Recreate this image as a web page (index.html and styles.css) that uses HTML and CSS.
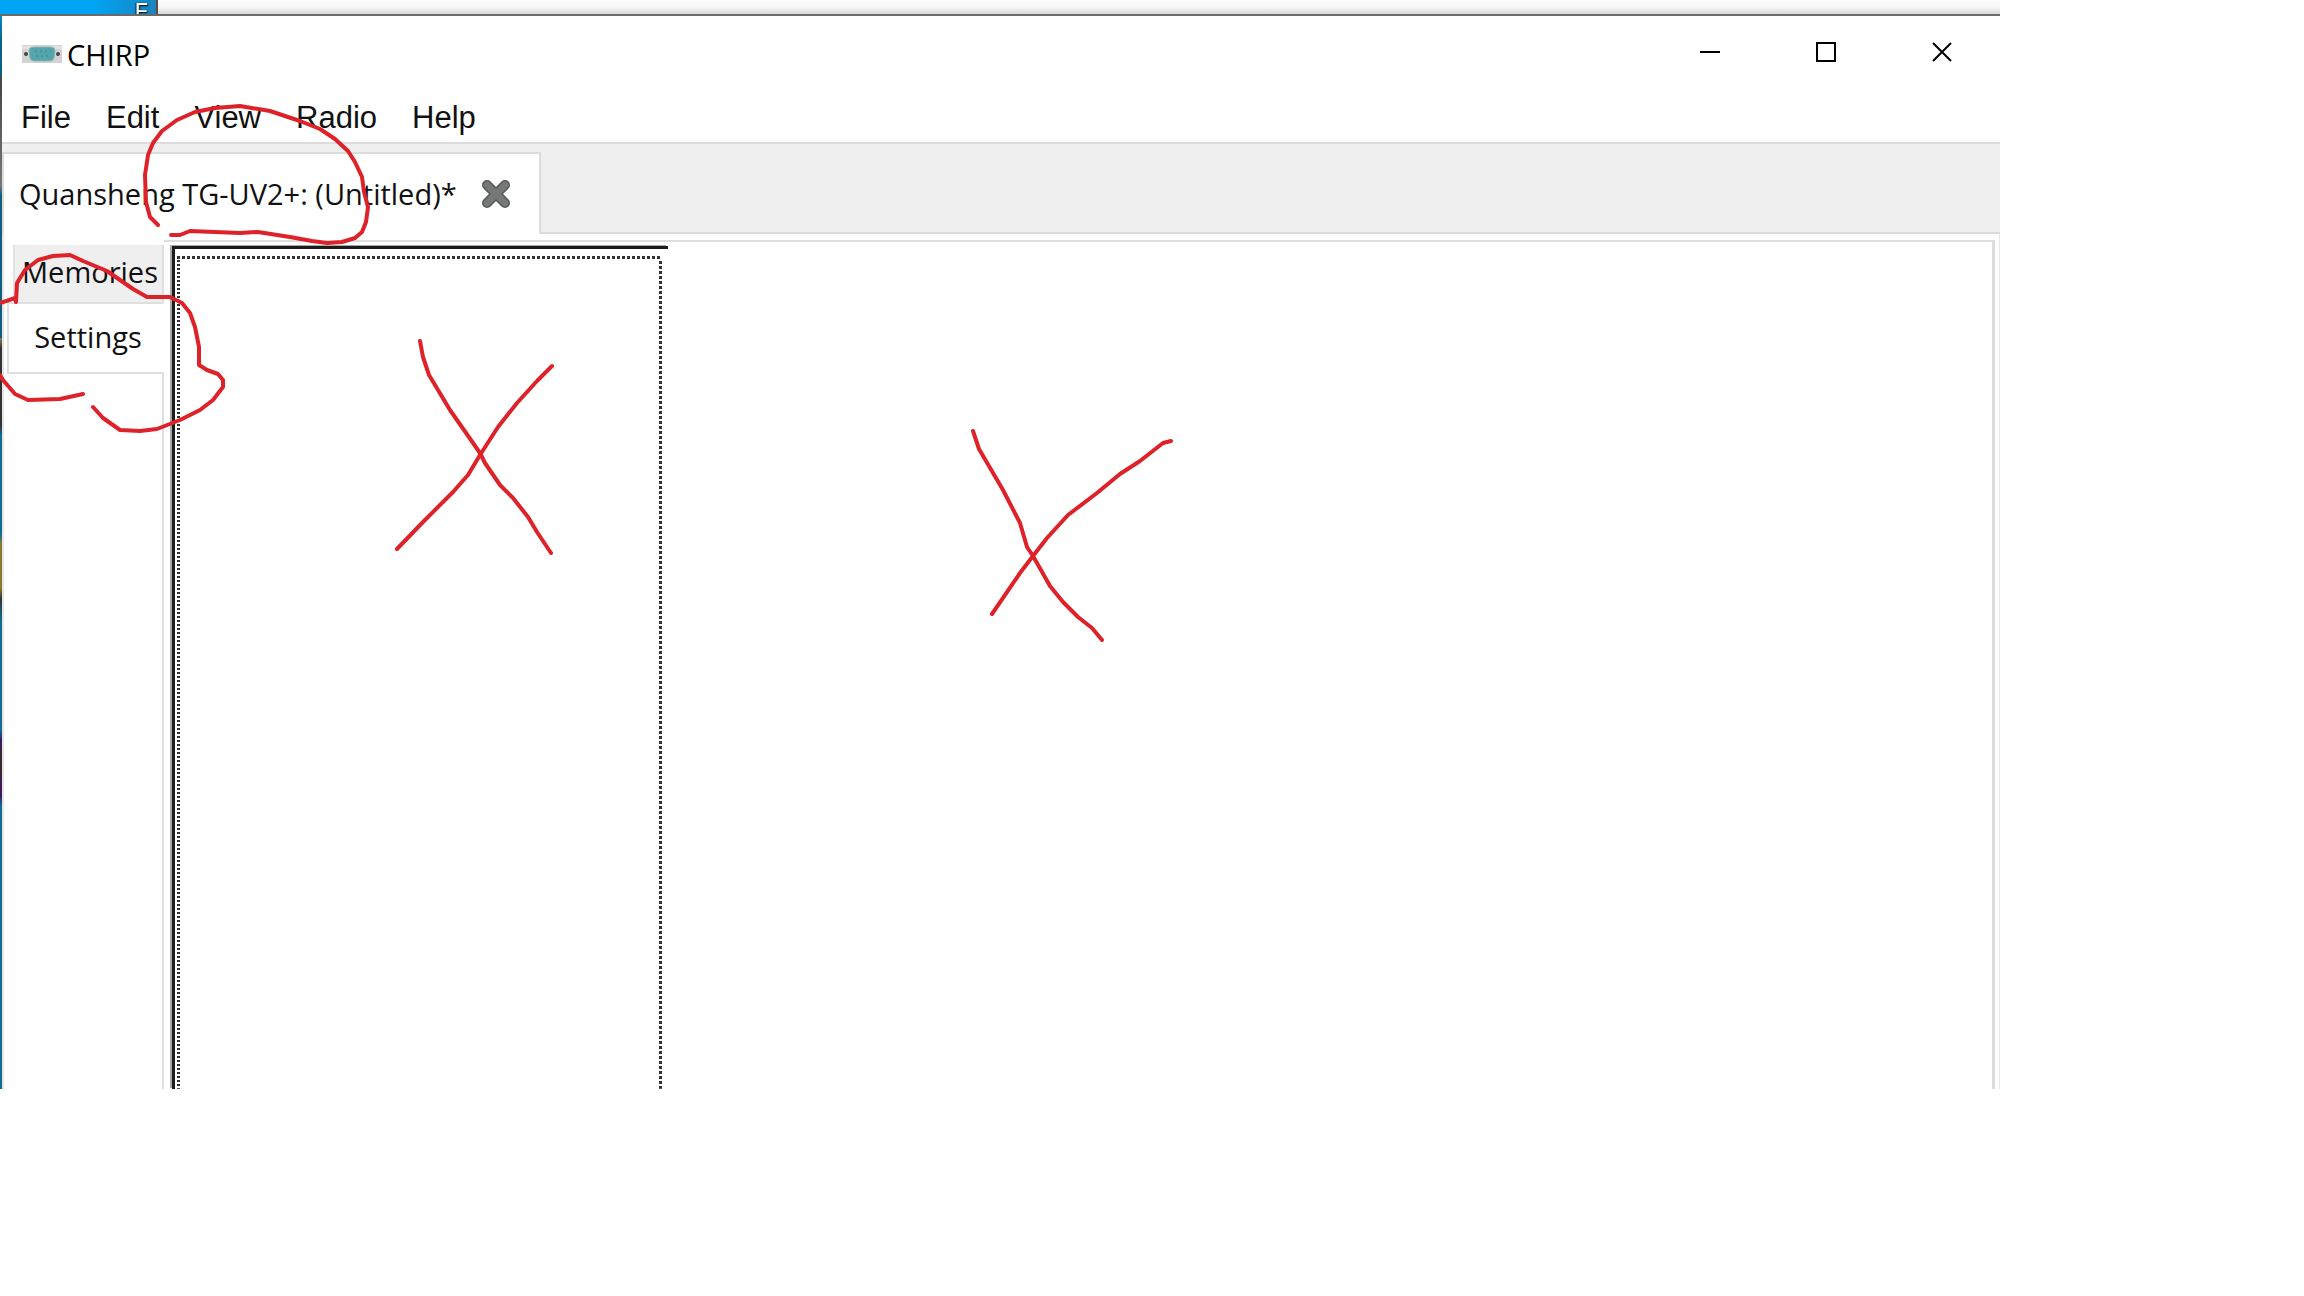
FILE: index.html
```
<!DOCTYPE html>
<html lang="en">
<head>
<meta charset="utf-8">
<title>CHIRP</title>
<link rel="stylesheet" href="styles.css">
</head>
<body>
<div class="desktop">
  <div class="backdrop">
    <div class="wallpaper"><span class="shortcut">E</span></div>
    <div class="behind"></div>
  </div>
  <main class="window">
    <header class="titlebar">
      <svg class="app-icon" viewBox="0 0 40 18" aria-hidden="true">
        <rect width="40" height="18" fill="#d3d3d5"/>
        <rect y="1" width="40" height="3" fill="#e2e2e4"/>
        <path d="M11 2h18q4 0 4 4l-1 7q-1 3-4 3H12q-3 0-4-3L7 6q0-4 4-4z" fill="#55a6aa" stroke="#8fb3b6" stroke-width="1"/>
        <path d="M13 6h2m3 0h2m3 0h2m3 0h1M14 11h2m3 0h2m3 0h2" stroke="#46959a" stroke-width="2"/>
        <circle cx="4" cy="9" r="2" fill="#444"/><circle cx="36" cy="9" r="2" fill="#444"/>
      </svg>
      <h1 class="title">CHIRP</h1>
      <div class="controls">
        <button class="control" aria-label="Minimize"><svg viewBox="0 0 20 20"><path d="M0 10h20"/></svg></button>
        <button class="control" aria-label="Maximize"><svg viewBox="0 0 20 20"><path d="M1 1h18v18H1z"/></svg></button>
        <button class="control" aria-label="Close"><svg viewBox="0 0 20 20"><path d="M1 1l18 18M19 1L1 19"/></svg></button>
      </div>
    </header>
    <nav class="menubar">
      <button class="menu">File</button>
      <button class="menu">Edit</button>
      <button class="menu">View</button>
      <button class="menu">Radio</button>
      <button class="menu">Help</button>
    </nav>
    <div class="tabbar">
      <div class="doc-tab">
        <button class="doc-name">Quansheng TG-UV2+: (Untitled)*</button>
        <button class="doc-close" aria-label="Close tab"><svg viewBox="0 0 30 30"><path class="cross-edge" d="M6 6l18 18M24 6L6 24"/><path class="cross" d="M6 6l18 18M24 6L6 24"/></svg></button>
      </div>
      <div class="tab-fill"></div>
    </div>
    <div class="editor">
      <div class="side-tabs">
        <button class="side-tab">Memories</button>
        <button class="side-tab selected">Settings</button>
        <div class="side-fill"></div>
      </div>
      <section class="panel">
        <div class="tree"><div class="focus"></div></div>
      </section>
    </div>
  </main>
  <svg class="ink" aria-hidden="true">
    <path d="M158 225L150 217L146 202L145 175L148 155L153 143L162 131L177 120L195 112L215 108L240 106L270 111L300 121L320 129L335 139L348 151L355 162L362 177L364 192L368 207L366 222L362 232L355 238L342 242L327 243L312 241L290 237L258 232L240 233L190 231L180 235L171 235"/>
    <path d="M0 303L15 298L16 302L17 283L25 270L38 260L53 256L70 255L83 261L107 271L133 289L147 297L170 297L182 303L190 313L195 327L199 347L199 365L207 370L218 374L223 380L223 387L213 400L200 410L180 420L157 429L140 431L120 430L103 418L93 407"/>
    <path d="M83 394L60 399L28 400L15 394L3 380L0 375"/>
    <path d="M420 341L423 357L429 375L450 410L480 453L485 463L500 485L513 498L528 517L537 532L551 553"/>
    <path d="M552 366L537 381L517 403L498 427L480 455L468 475L453 492L423 522L397 549"/>
    <path d="M973 431L979 449L1003 490L1020 523L1027 547L1033 556L1050 586L1063 602L1078 617L1092 628L1102 640"/>
    <path d="M1171 441L1163 443L1140 461L1120 474L1097 493L1068 515L1047 538L1033 556L1020 573L992 614"/>
  </svg>
</div>
</body>
</html>
```
FILE: styles.css
```
* { box-sizing: border-box; }
body { margin: 0; padding-right: 304px; background: #fff; color: #111; }
button { margin: 0; padding: 0; border: 0; background: none; color: inherit; }

.desktop {
  position: relative;
  display: flex;
  flex-direction: column;
  min-height: 84vh;
  padding-left: 2px;
  background: linear-gradient(#00a2f0 0, #0b5f85 4%, #0b5f85 7%, #444 7%, #777 17%, #0e5f80 18%, #0e5f80 31%, #8f7d55 31%, #333 32%, #333 39%, #0f6d90 40%, #0f6d90 49%, #8a7a30 50%, #8a7a30 54%, #333 55%, #0f6d90 57%, #0f6d90 67%, #3d1a60 68%, #3a2a28 70%, #421460 73%, #0f6d90 74%);
}
.backdrop { display: flex; height: 16px; margin-left: -2px; border-bottom: 2px solid #6b6b6d; }
.wallpaper {
  width: 158px;
  padding-left: 134px;
  overflow: hidden;
  border-right: 2px solid #5a4a48;
  background: linear-gradient(90deg, #00a4f4 0, #00a4f4 60%, #1b84bd 100%);
}
.shortcut { display: block; font: 26px/22px "Open Sans", sans-serif; color: #fff; text-shadow: 1px 1px 2px #000, -1px 0 1px #123; }
.behind { flex: 1; background: linear-gradient(#fdfdfd, #f6f6f6 50%, #d9d9d9); }

.window { flex: 1; display: flex; flex-direction: column; background: #fff; }
.titlebar { display: flex; align-items: center; height: 76px; padding-left: 20px; }
.app-icon { width: 40px; height: 18px; }
.title { flex: 1; margin: 0 0 0 5px; padding-top: 2px; font: 29px/40px "Open Sans", sans-serif; color: #000; }
.controls { display: flex; align-self: flex-start; }
.control { display: grid; place-items: center; width: 116px; height: 72px; }
.control svg { width: 20px; height: 20px; fill: none; stroke: #000; stroke-width: 2; }

.menubar { display: flex; gap: 35px; height: 50px; padding-left: 19px; }
.menu { font: 31px/52px "Liberation Sans", Arial, sans-serif; }

.tabbar { display: flex; height: 92px; border-top: 2px solid #dcdcdc; background: #efefef; }
.doc-tab {
  display: flex;
  align-items: center;
  gap: 24px;
  margin-top: 8px;
  padding: 0 28px 0 15px;
  border: 2px solid #dcdcdc;
  border-bottom: 0;
  background: #fff;
}
.doc-name, .side-tab { font: 29px/40px "Open Sans", sans-serif; white-space: nowrap; }
.doc-close { display: grid; }
.doc-close svg { width: 30px; height: 30px; fill: none; stroke-linecap: round; }
.cross-edge { stroke: #555957; stroke-width: 10; }
.cross { stroke: #747876; stroke-width: 7; }
.tab-fill { flex: 1; border-bottom: 2px solid #dcdcdc; }

.editor {
  flex: 1;
  display: flex;
  padding: 6px 4px 0 3px;
  border: 2px solid #e6e6e6;
  border-width: 0 1px 0 2px;
}
.side-tabs { display: flex; flex-direction: column; width: 157px; padding-top: 5px; }
.side-tab { height: 57px; margin-left: 6px; padding: 0 0 3px 3px; border-left: 2px solid #e2e2e2; border-right: 2px solid #dfdfdf; background: #efefef; text-align: center; }
.side-tab.selected { height: 72px; margin-left: 0; border: 2px solid #dfdfdf; border-right: 0; background: #fff; }
.side-fill { flex: 1; border-right: 2px solid #dfdfdf; }
.panel { flex: 1; display: flex; padding: 4px 0 0 8px; border-top: 2px solid #dfdfdf; border-right: 3px solid #dcdcdc; }
.tree {
  display: flex;
  width: 496px;
  padding: 7px 6px 0 2px;
  border: solid #1c1c1e;
  border-width: 3px 0 0 3px;
  box-shadow: -2px -1px 0 #a8a8a8;
}
/* Keyboard focus rectangle of the tree, with no bottom edge in view */
.focus {
  flex: 1;
  background:
    repeating-linear-gradient(90deg, #333 0 3px, #fff 3px 5px) top / 100% 3px no-repeat,
    repeating-linear-gradient(#333 0 2px, #fff 2px 4px) left / 3px 100% no-repeat,
    repeating-linear-gradient(#333 0 3px, #fff 3px 5px) right / 3px 100% no-repeat;
}
.ink {
  position: absolute;
  inset: 0;
  width: 100%;
  height: 100%;
  pointer-events: none;
  fill: none;
  stroke: #dd2229;
  stroke-width: 4;
  stroke-linecap: round;
  stroke-linejoin: round;
}
```
